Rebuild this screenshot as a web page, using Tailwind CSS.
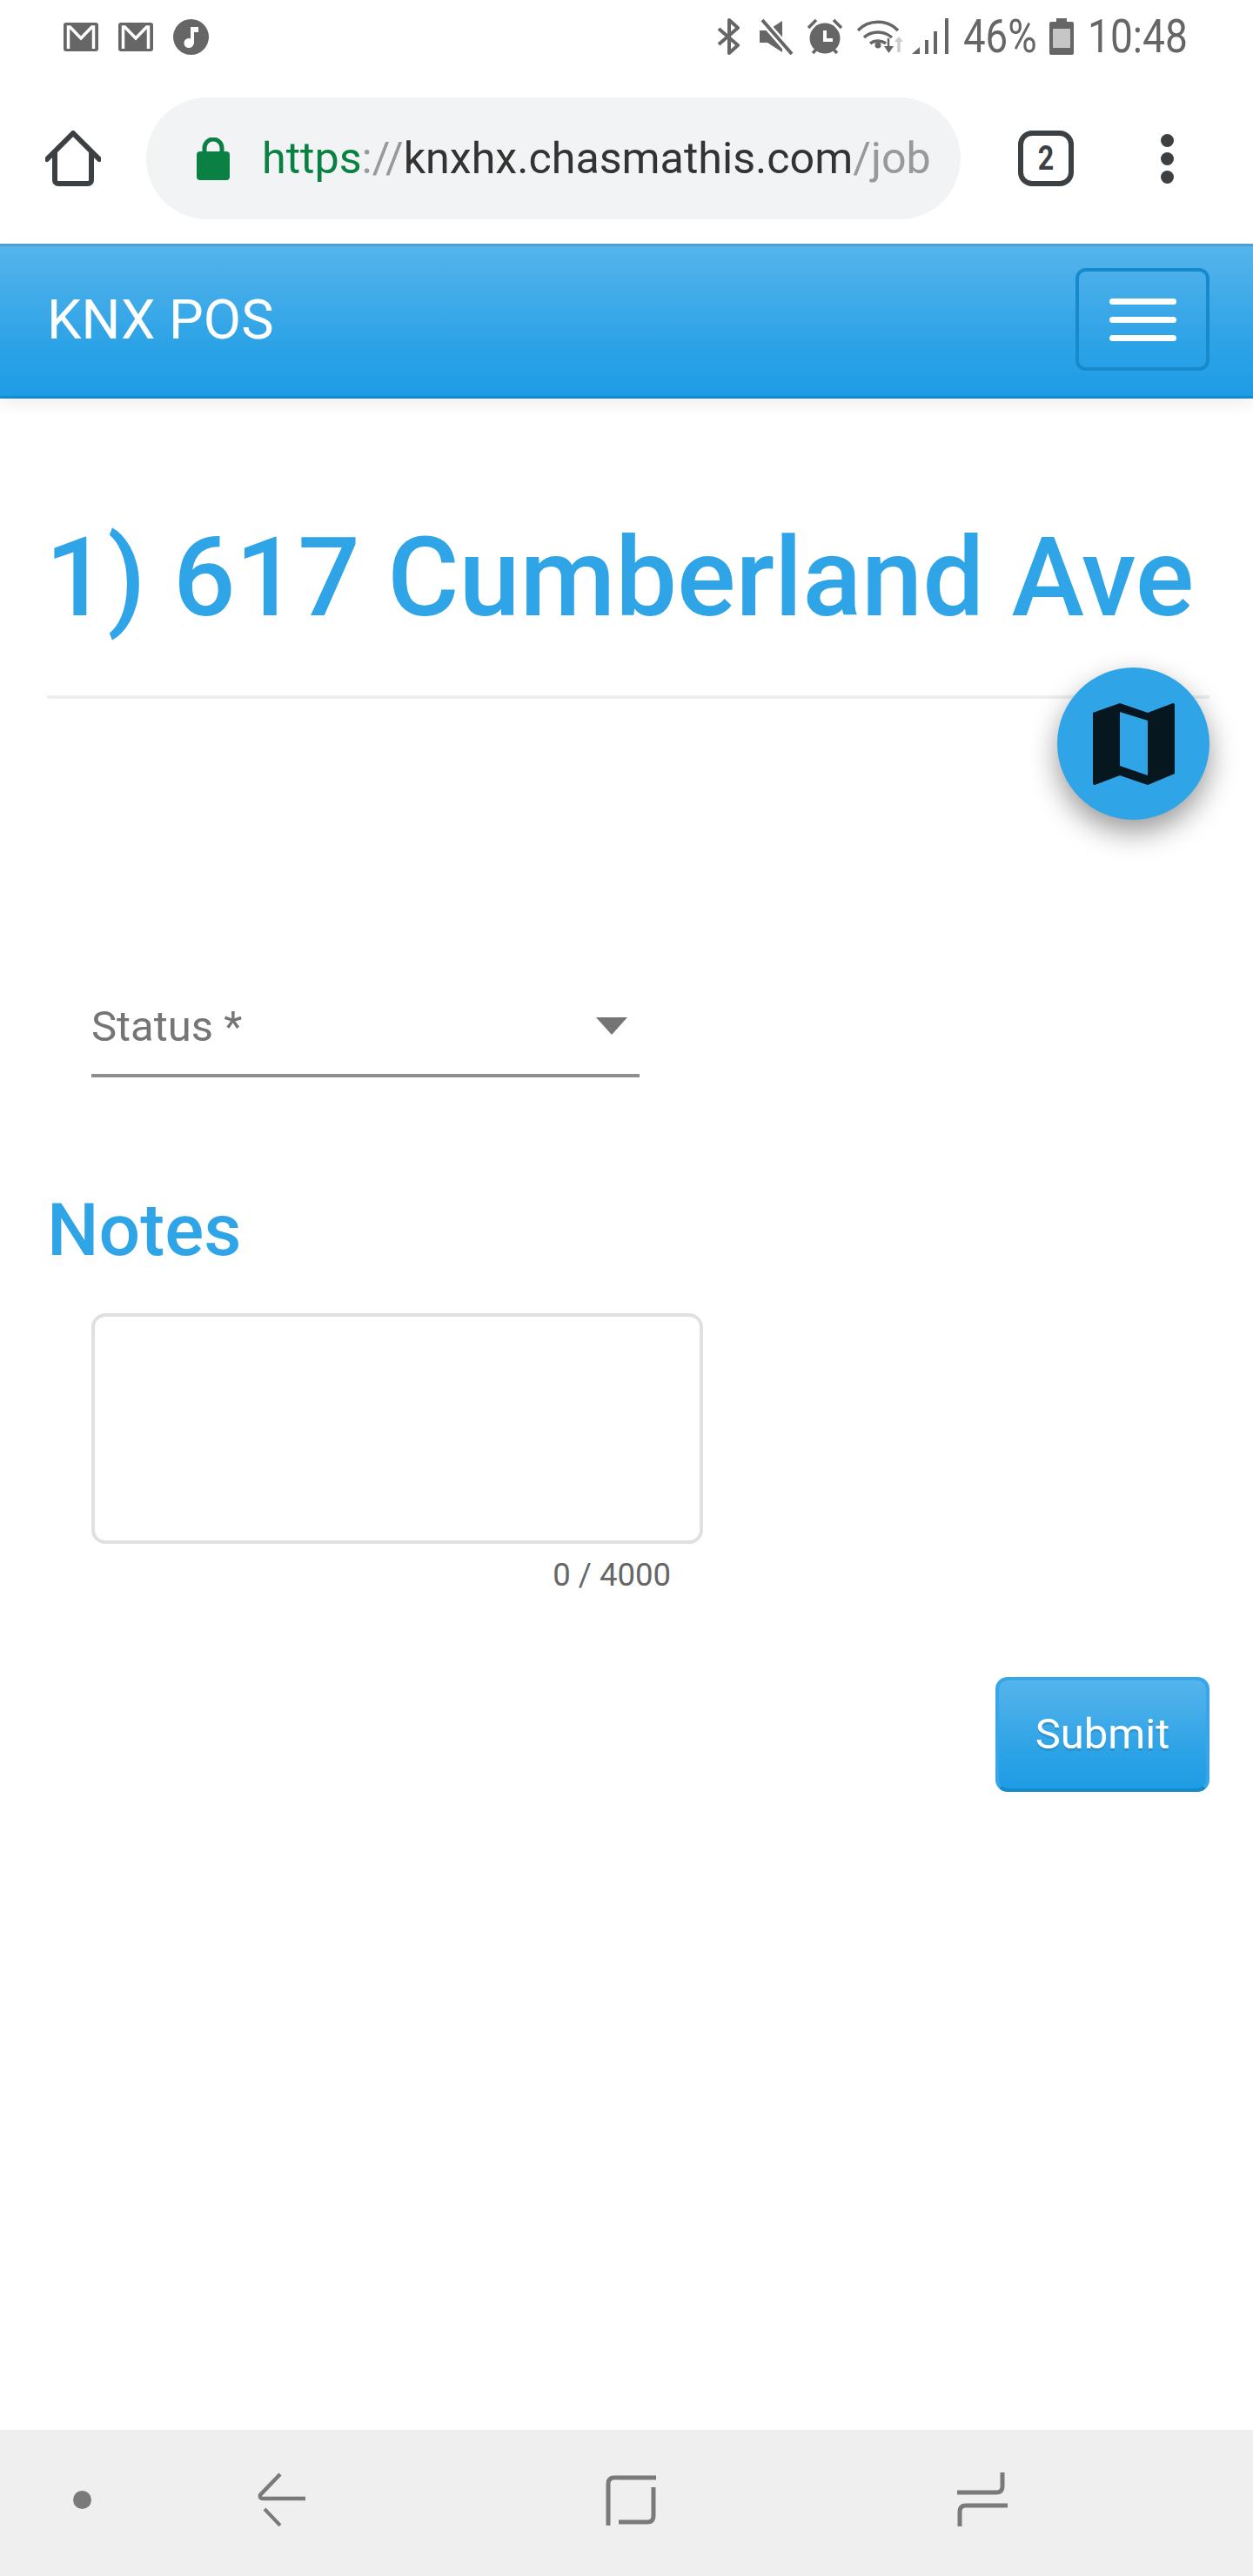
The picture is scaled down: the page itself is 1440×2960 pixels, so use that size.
<!DOCTYPE html>
<html lang="en">
<head>
<meta charset="utf-8">
<title>KNX POS</title>
<script src="https://cdn.jsdelivr.net/npm/@tailwindcss/browser@4"></script>
</head>
<body class="bg-white">
<div class="relative flex h-[2960px] w-[1440px] flex-col overflow-hidden bg-white font-['Roboto',sans-serif]">

  <!-- status bar -->
  <div class="flex h-[84px] items-center justify-between pl-[73px] pr-[77px] text-[#666]">
    <div class="flex items-center gap-[23px]">
      <svg width="40" height="33" viewBox="0 0 40 33"><rect width="40" height="33" rx="3" fill="#666"/><path d="M5.5 30V5h2L20 18 32.500 5h2v25" fill="none" stroke="#fff" stroke-width="3.500"/></svg>
      <svg width="40" height="33" viewBox="0 0 40 33"><rect width="40" height="33" rx="3" fill="#666"/><path d="M5.5 30V5h2L20 18 32.500 5h2v25" fill="none" stroke="#fff" stroke-width="3.500"/></svg>
      <svg width="41" height="41" viewBox="0 0 41 41"><circle cx="20.500" cy="20.500" r="20.500" fill="#666"/><path d="M20 9h9v6h-5v14h-4z" fill="#fff"/><circle cx="18" cy="27.500" r="5.500" fill="#fff"/></svg>
    </div>
    <div class="flex items-center">
      <svg width="27" height="42" viewBox="0 0 27 42"><path d="M2 12l22 19-10 9V2l10 9L2 30" fill="none" stroke="#666" stroke-width="4" stroke-linejoin="round"/></svg>
      <svg class="ml-[22px]" width="39" height="42" viewBox="0 0 39 42"><path d="M0 14h9L26 3v36L9 28H0z" fill="#666"/><path d="M2 1l35 40" stroke="#fff" stroke-width="9"/><path d="M3 2l34 39" stroke="#666" stroke-width="4"/></svg>
      <svg class="ml-[15px]" width="42" height="42" viewBox="0 0 42 42"><circle cx="21" cy="23" r="17.500" fill="#666"/><path d="M2 11l9-9M40 11l-9-9M7 40l4-4M35 40l-4-4" stroke="#666" stroke-width="3.500"/><path d="M21 14v11h9" fill="none" stroke="#fff" stroke-width="4"/></svg>
      <svg class="ml-[16px]" width="56" height="44" viewBox="0 0 56 44"><path d="M1 15C13 2 35 2 47 15M8 23c9-8 23-8 32 0M15 30c5-4 13-4 18 0" fill="none" stroke="#666" stroke-width="3.500"/><circle cx="24" cy="32" r="3.500" fill="#666"/><path d="M36 24v14" stroke="#666" stroke-width="2.500"/><path d="M31 33h11l-5.500 8z" fill="#666"/><path d="M48 40V26" stroke="#ccc" stroke-width="3.500"/><path d="M43 28h10l-5-6z" fill="#ccc"/></svg>
      <svg class="ml-[7px]" width="43" height="42" viewBox="0 0 43 42"><path d="M0 41l9-8v8z" fill="#666"/><rect x="15" y="25" width="4" height="16" fill="#666"/><rect x="25" y="15" width="4" height="26" fill="#666"/><rect x="38" y="0" width="4" height="41" fill="#666"/></svg>
      <span class="ml-[16px] inline-block w-[84px] origin-left scale-x-[0.86] whitespace-nowrap text-[53px] leading-[52px]">46%</span>
      <svg class="ml-[15px]" width="28" height="42" viewBox="0 0 28 42"><path d="M8 0h12v4h6a2 2 0 0 1 2 2v34a2 2 0 0 1-2 2H2a2 2 0 0 1-2-2V6a2 2 0 0 1 2-2h6z" fill="#666"/><rect x="4" y="12" width="20" height="22" fill="#c6c6c6"/></svg>
      <span class="ml-[16px] inline-block w-[113px] origin-left scale-x-[0.87] whitespace-nowrap text-[53px] leading-[52px]">10:48</span>
    </div>
  </div>

  <!-- browser toolbar -->
  <div class="flex h-[196px] items-center">
    <svg class="ml-[52px]" width="64" height="64" viewBox="0 0 64 64"><path d="M2 33L32 3l30 30M11 26v31a4 4 0 0 0 4 4h34a4 4 0 0 0 4-4V26" fill="none" stroke="#3c4043" stroke-width="6" stroke-linecap="round" stroke-linejoin="round"/></svg>
    <div class="ml-[52px] flex h-[140px] w-[936px] items-center rounded-[70px] bg-[#f1f3f4] pl-[58px]">
      <svg width="38" height="49" viewBox="0 0 38 49"><path d="M9 19v-7a10 10 0 0 1 20 0v7" fill="none" stroke="#0b8043" stroke-width="5"/><rect y="16" width="38" height="33" rx="4" fill="#0b8043"/></svg>
      <div class="ml-[37px] whitespace-nowrap text-[50.2px] leading-[60px] text-[#333]"><span class="text-[#0b8043]">https</span><span class="text-[#999]">://</span>knxhx.chasmathis.com<span class="text-[#999]">/job</span></div>
    </div>
    <div class="ml-[66px] flex h-[64px] w-[64px] items-center justify-center rounded-[16px] border-[6px] border-[#3c4043] text-[38px] font-bold leading-none text-[#3c4043]"><span class="inline-block scale-x-[0.85]">2</span></div>
    <div class="ml-[100px] flex flex-col gap-[6px]">
      <span class="block h-[15px] w-[15px] rounded-full bg-[#3c4043]"></span>
      <span class="block h-[15px] w-[15px] rounded-full bg-[#3c4043]"></span>
      <span class="block h-[15px] w-[15px] rounded-full bg-[#3c4043]"></span>
    </div>
  </div>

  <!-- navbar -->
  <nav class="flex h-[178px] items-center justify-between border-y-[3px] border-t-[#4f9fd0] border-b-[#178acc] bg-linear-to-b from-[#54b4eb] via-[#2fa4e7] via-60% to-[#1d9ce5] pb-[4px] pl-[54px] pr-[50px] shadow-[0_8px_16px_rgba(0,0,0,0.06)]">
    <span class="text-[63px] leading-none text-white">KNX POS</span>
    <div class="flex h-[118px] w-[154px] flex-col items-center justify-center gap-[14px] rounded-[12px] border-[4px] border-[#178acc]">
      <span class="block h-[7px] w-[77px] rounded-full bg-white"></span>
      <span class="block h-[7px] w-[77px] rounded-full bg-white"></span>
      <span class="block h-[7px] w-[77px] rounded-full bg-white"></span>
    </div>
  </nav>

  <!-- main -->
  <main class="flex-1 px-[50px]">
    <h1 class="ml-[2px] mt-[137px] whitespace-nowrap text-[126px] font-medium leading-[139px] text-[#2fa4e7]">1) 617 Cumberland Ave</h1>
    <div class="ml-[4px] mt-[65px] h-[4px] bg-[#eeeeee]"></div>

    <div class="ml-[55px] mt-[327px] flex h-[108px] w-[630px] items-center justify-between border-b-[4px] border-[#8e8e8e] pb-[6px] pr-[14px]">
      <span class="text-[49px] leading-none text-[#757575]">Status *</span>
      <svg width="36" height="20" viewBox="0 0 36 20"><path d="M0 0h36L18 20z" fill="#757575"/></svg>
    </div>

    <h2 class="ml-[4px] mt-[130px] text-[84px] font-medium leading-[92px] text-[#2fa4e7]">Notes</h2>

    <textarea class="ml-[55px] mt-[49px] block h-[265px] w-[703px] resize-none rounded-[16px] border-[4px] border-[#e0e0e0] bg-white outline-none" aria-label="Notes"></textarea>
    <div class="ml-[55px] mt-[16px] w-[666px] text-right text-[36.5px] leading-[40px] text-[#666]">0 / 4000</div>

    <div class="mt-[97px] flex justify-end">
      <button class="h-[132px] w-[246px] rounded-[14px] border-[4px] border-[#36a6e8] border-b-[#178acc] bg-linear-to-b from-[#54b4eb] via-[#2fa4e7] via-60% to-[#1d9ce5] text-[49px] text-white [text-shadow:0_3px_0_rgba(0,0,0,0.1)]">Submit</button>
    </div>
  </main>

  <!-- floating map button -->
  <div class="absolute left-[1215px] top-[767px] flex h-[175px] w-[175px] items-center justify-center rounded-full bg-[#2fa4e7] shadow-[0_14px_32px_rgba(0,0,0,0.4)]">
    <svg width="94" height="94" viewBox="0 0 94 94"><path d="M0 11L31 0l32 11L92 0q2 0 2 2v79L63 94 31 83 2 94q-2 0-2-2z" fill="#07171f"/><path d="M31 10l32 10v63L31 72z" fill="#2fa4e7"/></svg>
  </div>

  <!-- android nav bar -->
  <div class="flex h-[168px] items-center bg-[#efefef] pb-[8px] pl-[84px]">
    <span class="block h-[21px] w-[21px] rounded-full bg-[#7a7a7a]"></span>
    <svg class="ml-[190px]" width="56" height="62" viewBox="0 0 56 62"><path d="M27 2L4 26q-1 4 3 4h49" fill="none" stroke="#7a7a7a" stroke-width="4.500"/><path d="M9 42l18 19" fill="none" stroke="#7a7a7a" stroke-width="4"/></svg>
    <svg class="ml-[345px]" width="58" height="60" viewBox="0 0 58 60"><path d="M58 5H10Q3 5 3 12v48" fill="none" stroke="#7a7a7a" stroke-width="5"/><path d="M55 16v33q0 7-7 7H15" fill="none" stroke="#7a7a7a" stroke-width="5"/></svg>
    <svg class="ml-[346px]" width="58" height="62" viewBox="0 0 58 62"><path d="M52 0v16q0 7-7 7H0" fill="none" stroke="#7a7a7a" stroke-width="5"/><path d="M58 38H10Q3 38 3 45v17" fill="none" stroke="#7a7a7a" stroke-width="5"/></svg>
  </div>
</div>
</body>
</html>
